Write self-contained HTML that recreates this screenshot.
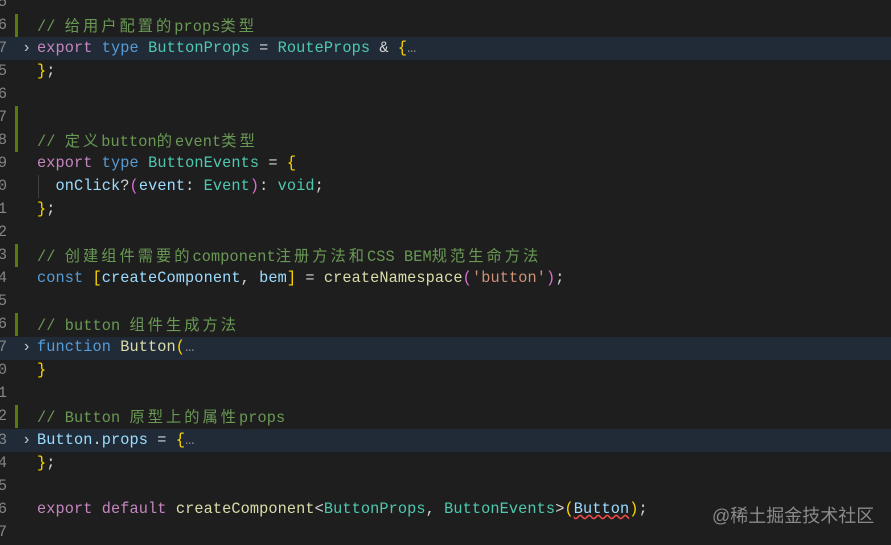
<!DOCTYPE html>
<html><head><meta charset="utf-8"><style>
body{margin:0;width:891px;height:545px;background:#1e1e1e;overflow:hidden;position:relative;font-family:"Liberation Mono","Noto Sans CJK SC",monospace;font-size:15.25px;color:#d4d4d4}
.l{position:absolute;left:0;width:891px;height:23px;line-height:23px;white-space:pre}
.n{position:absolute;left:-5px;color:#858585;width:12px;text-align:right}
.t{position:absolute;left:37px;letter-spacing:0.1px}
.hl{background:#212b37}
.bar{position:absolute;left:15px;width:3px;background:#587c0c}
.ar{position:absolute;left:22px;color:#c5c5c5}
.c{color:#6a9955}.k{color:#c586c0}.b{color:#569cd6}.y{color:#4ec9b0}.f{color:#dcdcaa}.v{color:#9cdcfe}.s{color:#ce9178}.g{color:#ffd700}.p{color:#da70d6}
.z{font-family:"Noto Sans CJK SC",sans-serif;letter-spacing:3px}
.guide{position:absolute;left:38px;width:1px;background:#404040}
.wm{position:absolute;left:712px;top:502px;font-family:"Liberation Sans","Noto Sans CJK SC",sans-serif;font-size:18px;color:#8a8a8a}
</style></head><body>
<div class="l hl" style="top:37px"></div>
<div class="l hl" style="top:337px"></div>
<div class="l hl" style="top:429px"></div>
<div class="bar" style="top:14px;height:23px"></div>
<div class="bar" style="top:106px;height:46px"></div>
<div class="bar" style="top:244px;height:23px"></div>
<div class="bar" style="top:313px;height:23px"></div>
<div class="bar" style="top:405px;height:23px"></div>
<div class="guide" style="top:175px;height:23px"></div>

<div class="l" style="top:-9px"><span class="n">5</span></div>
<div class="l" style="top:14px"><span class="n">6</span><span class="t c">// <span class="z">给用户配置的</span>props<span class="z">类型</span></span></div>
<div class="l" style="top:37px"><span class="n">7</span><span class="ar">›</span><span class="t"><span class="k">export</span> <span class="b">type</span> <span class="y">ButtonProps</span> = <span class="y">RouteProps</span> &amp; <span class="g">{</span><span style="color:#888">…</span></span></div>
<div class="l" style="top:60px"><span class="n">5</span><span class="t"><span class="g">}</span>;</span></div>
<div class="l" style="top:83px"><span class="n">6</span></div>
<div class="l" style="top:106px"><span class="n">7</span></div>
<div class="l" style="top:129px"><span class="n">8</span><span class="t c">// <span class="z">定义</span>button<span class="z">的</span>event<span class="z">类型</span></span></div>
<div class="l" style="top:152px"><span class="n">9</span><span class="t"><span class="k">export</span> <span class="b">type</span> <span class="y">ButtonEvents</span> = <span class="g">{</span></span></div>
<div class="l" style="top:175px"><span class="n">0</span><span class="t">  <span class="v">onClick</span>?<span class="p">(</span><span class="v">event</span>: <span class="y">Event</span><span class="p">)</span>: <span class="y">void</span>;</span></div>
<div class="l" style="top:198px"><span class="n">1</span><span class="t"><span class="g">}</span>;</span></div>
<div class="l" style="top:221px"><span class="n">2</span></div>
<div class="l" style="top:244px"><span class="n">3</span><span class="t c">// <span class="z">创建组件需要的</span>component<span class="z">注册方法和</span>CSS BEM<span class="z">规范生命方法</span></span></div>
<div class="l" style="top:267px"><span class="n">4</span><span class="t"><span class="b">const</span> <span class="g">[</span><span class="v">createComponent</span>, <span class="v">bem</span><span class="g">]</span> = <span class="f">createNamespace</span><span class="p">(</span><span class="s">'button'</span><span class="p">)</span>;</span></div>
<div class="l" style="top:290px"><span class="n">5</span></div>
<div class="l" style="top:313px"><span class="n">6</span><span class="t c">// button <span class="z">组件生成方法</span></span></div>
<div class="l" style="top:336px"><span class="n">7</span><span class="ar">›</span><span class="t"><span class="b">function</span> <span class="f">Button</span><span class="g">(</span><span style="color:#888">…</span></span></div>
<div class="l" style="top:359px"><span class="n">0</span><span class="t"><span class="g">}</span></span></div>
<div class="l" style="top:382px"><span class="n">1</span></div>
<div class="l" style="top:405px"><span class="n">2</span><span class="t c">// Button <span class="z">原型上的属性</span>props</span></div>
<div class="l" style="top:429px"><span class="n">3</span><span class="ar">›</span><span class="t"><span class="v">Button</span>.<span class="v">props</span> = <span class="g">{</span><span style="color:#888">…</span></span></div>
<div class="l" style="top:452px"><span class="n">4</span><span class="t"><span class="g">}</span>;</span></div>
<div class="l" style="top:475px"><span class="n">5</span></div>
<div class="l" style="top:498px"><span class="n">6</span><span class="t"><span class="k">export</span> <span class="k">default</span> <span class="f">createComponent</span>&lt;<span class="y">ButtonProps</span>, <span class="y">ButtonEvents</span>&gt;<span class="g">(</span><span class="v" style="text-decoration:underline wavy #f14c4c">Button</span><span class="g">)</span>;</span></div>
<div class="l" style="top:521px"><span class="n">7</span></div>
<div class="wm">@稀土掘金技术社区</div>
</body></html>
